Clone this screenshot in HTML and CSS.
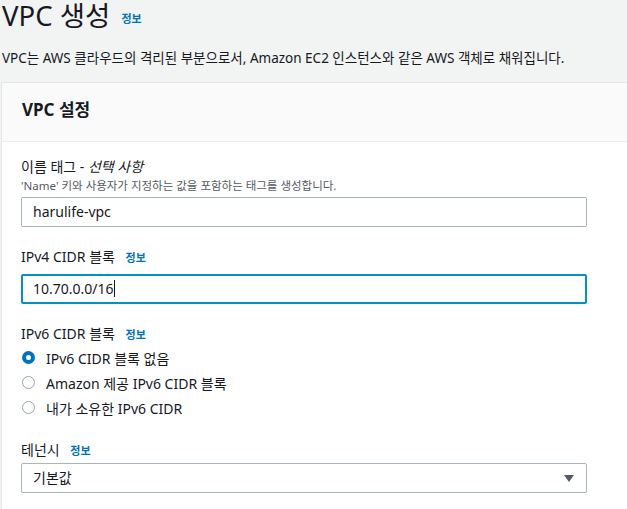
FILE: index.html
```html
<!DOCTYPE html>
<html lang="ko">
<head>
<meta charset="utf-8">
<link rel="stylesheet" href="styles.css">
</head>
<body>
<header class="page-head">
  <h1 class="title">VPC 생성 <a class="info info-title">정보</a></h1>
  <p class="desc">VPC는 AWS 클라우드의 격리된 부분으로서, Amazon EC2 인스턴스와 같은 AWS 객체로 채워집니다.</p>
</header>
<section class="panel">
  <div class="panel-head"><h2>VPC 설정</h2></div>
  <div class="panel-body">
    <div class="field">
      <div class="label">이름 태그 - <em>선택 사항</em></div>
      <div class="hint">'Name' 키와 사용자가 지정하는 값을 포함하는 태그를 생성합니다.</div>
      <div class="input">harulife-vpc</div>
    </div>
    <div class="field">
      <div class="label">IPv4 CIDR 블록 <a class="info">정보</a></div>
      <div class="input focus">10.70.0.0/16<span class="caret"></span></div>
    </div>
    <div class="field">
      <div class="label">IPv6 CIDR 블록 <a class="info">정보</a></div>
      <div class="radios">
        <div class="radio"><span class="dot on"></span>IPv6 CIDR 블록 없음</div>
        <div class="radio"><span class="dot"></span>Amazon 제공 IPv6 CIDR 블록</div>
        <div class="radio"><span class="dot"></span>내가 소유한 IPv6 CIDR</div>
      </div>
    </div>
    <div class="field">
      <div class="label">테넌시 <a class="info">정보</a></div>
      <div class="input select">기본값<span class="arrow"></span></div>
    </div>
  </div>
</section>
</body>
</html>
```
FILE: styles.css
```css
* { box-sizing: border-box; }
html, body { margin: 0; padding: 0; }
body {
  background: #f2f3f3;
  font-family: "Noto Sans", "Noto Sans CJK KR", sans-serif;
  color: #16191f;
  overflow: hidden;
  width: 627px;
  height: 509px;
}
.page-head { padding: 0 0 0 2px; }
.title {
  margin: 0;
  font-size: 27.5px;
  font-weight: 400;
  line-height: 32px;
}
.info {
  color: #0073bb;
  font-weight: 700;
  font-size: 11px;
  margin-left: 7px;
  text-decoration: none;
}
.info-title { margin-left: 4px; vertical-align: 3px; }
.desc {
  margin: 13px 0 0;
  font-size: 13.5px;
  line-height: 20px;
}
.panel {
  margin: 14px -30px 0 1px;
  background: #fff;
  border-top: 1px solid #e4e7e7;
  border-left: 1px solid #e4e7e7;
}
.panel-head {
  background: #fafafa;
  border-bottom: 1px solid #eaeded;
  padding: 15px 20px 0;
  height: 59px;
}
.panel-head h2 {
  margin: 0;
  font-size: 17px;
  font-weight: 700;
  line-height: 24px;
}
.panel-body { padding: 15px 19px 20px; }
.field { margin-bottom: 20px; }
.label { font-size: 14px; line-height: 20px; }
.label em { font-style: italic; }
.hint { font-size: 11.5px; color: #545b64; line-height: 16px; margin-top: 1px; }
.input {
  margin-top: 3px;
  width: 566px;
  height: 30px;
  border: 1px solid #aab7b8;
  border-radius: 2px;
  padding: 0 11px;
  font-size: 14px;
  line-height: 28px;
  background: #fff;
  position: relative;
}
.label + .input { margin-top: 6px; }
.input.focus { border: 2px solid #0093c4; padding-left: 10px; line-height: 26px; }
.caret { display: inline-block; width: 1px; height: 17px; background: #16191f; vertical-align: -3px; }
.radios { margin-top: 0; }
.radio { display: flex; align-items: center; height: 25px; font-size: 14px; }
.dot {
  width: 13px; height: 13px; border-radius: 50%;
  border: 1.5px solid #95a5a6;
  margin: 0 11px 0 1px;
  flex: none;
}
.dot.on { border: 4px solid #0073bb; }
.label + .select { margin-top: 2px; }
.arrow {
  position: absolute;
  right: 12px; top: 11px;
  width: 0; height: 0;
  border-left: 5px solid transparent;
  border-right: 5px solid transparent;
  border-top: 7px solid #545b64;
}
```
